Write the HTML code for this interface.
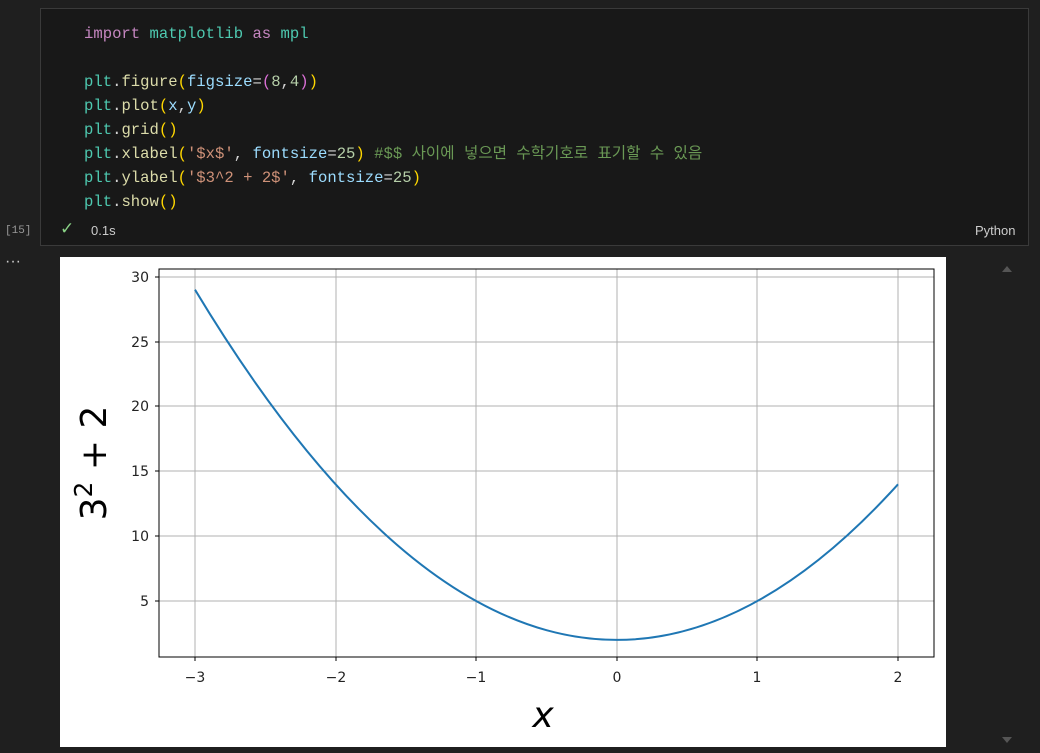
<!DOCTYPE html>
<html><head><meta charset="utf-8"><style>
body{margin:0;width:1040px;height:753px;background:#1f1f1f;position:relative;overflow:hidden;font-family:"Liberation Sans",sans-serif}
.cell{position:absolute;left:40px;top:8px;width:987px;height:236px;background:#181818;border:1px solid #3a3a3a}
.code{position:absolute;left:84px;top:22px;font-family:"Liberation Mono","Noto Sans CJK KR",monospace;font-size:15.6px;line-height:24px;white-space:pre;color:#d4d4d4}
.k{color:#c586c0}.t{color:#4ec9b0}.f{color:#dcdcaa}.p{color:#ffd700}.q{color:#da70d6}.v{color:#9cdcfe}.n{color:#b5cea8}.s{color:#ce9178}.c{color:#6a9955}
.sm{position:absolute;font-size:13px;color:#ccc}
</style></head><body>
<div class="cell"></div>
<div class="code"><span class="k">import</span> <span class="t">matplotlib</span> <span class="k">as</span> <span class="t">mpl</span>

<span class="t">plt</span>.<span class="f">figure</span><span class="p">(</span><span class="v">figsize</span>=<span class="q">(</span><span class="n">8</span>,<span class="n">4</span><span class="q">)</span><span class="p">)</span>
<span class="t">plt</span>.<span class="f">plot</span><span class="p">(</span><span class="v">x</span>,<span class="v">y</span><span class="p">)</span>
<span class="t">plt</span>.<span class="f">grid</span><span class="p">()</span>
<span class="t">plt</span>.<span class="f">xlabel</span><span class="p">(</span><span class="s">'$x$'</span>, <span class="v">fontsize</span>=<span class="n">25</span><span class="p">)</span> <span class="c">#$$ 사이에 넣으면 수학기호로 표기할 수 있음</span>
<span class="t">plt</span>.<span class="f">ylabel</span><span class="p">(</span><span class="s">'$3^2 + 2$'</span>, <span class="v">fontsize</span>=<span class="n">25</span><span class="p">)</span>
<span class="t">plt</span>.<span class="f">show</span><span class="p">()</span></div>
<div class="sm" style="left:5px;top:225px;font-size:11px;color:#999;font-family:'Liberation Mono',monospace">[15]</div>
<div class="sm" style="left:60px;top:219px;color:#89d185;font-size:17px">✓</div>
<div class="sm" style="left:91px;top:223px">0.1s</div>
<div class="sm" style="left:975px;top:223px">Python</div>
<div class="sm" style="left:5px;top:253px;font-size:16px;color:#ccc">···</div>
<svg style="position:absolute;left:0;top:0" width="1040" height="753">
<polygon points="1002,272 1012,272 1007,266" fill="#555"/>
<polygon points="1002,737 1012,737 1007,743" fill="#555"/>
<rect x="60" y="257" width="886" height="490" fill="#fff"/>
<g stroke="#b0b0b0" stroke-width="1">
<line x1="195" y1="269" x2="195" y2="657"/><line x1="336" y1="269" x2="336" y2="657"/><line x1="476" y1="269" x2="476" y2="657"/><line x1="617" y1="269" x2="617" y2="657"/><line x1="757" y1="269" x2="757" y2="657"/><line x1="898" y1="269" x2="898" y2="657"/>
<line x1="159" y1="277" x2="934" y2="277"/><line x1="159" y1="342" x2="934" y2="342"/><line x1="159" y1="406" x2="934" y2="406"/><line x1="159" y1="471" x2="934" y2="471"/><line x1="159" y1="536" x2="934" y2="536"/><line x1="159" y1="601" x2="934" y2="601"/>
</g>
<path fill="none" stroke="#1f77b4" stroke-width="2" d="M195,289.7 Q546.5,873.4 898,484.3"/>
<rect x="159" y="269" width="775" height="388" fill="none" stroke="#000" stroke-width="1"/>
<g stroke="#000"><line x1="195" y1="657" x2="195" y2="661"/><line x1="336" y1="657" x2="336" y2="661"/><line x1="476" y1="657" x2="476" y2="661"/><line x1="617" y1="657" x2="617" y2="661"/><line x1="757" y1="657" x2="757" y2="661"/><line x1="898" y1="657" x2="898" y2="661"/>
<line x1="155" y1="277" x2="159" y2="277"/><line x1="155" y1="342" x2="159" y2="342"/><line x1="155" y1="406" x2="159" y2="406"/><line x1="155" y1="471" x2="159" y2="471"/><line x1="155" y1="536" x2="159" y2="536"/><line x1="155" y1="601" x2="159" y2="601"/></g>
<g font-family="DejaVu Sans,sans-serif" font-size="14" fill="#222" text-anchor="middle">
<text x="195" y="682">−3</text><text x="336" y="682">−2</text><text x="476" y="682">−1</text><text x="617" y="682">0</text><text x="757" y="682">1</text><text x="898" y="682">2</text>
</g>
<g font-family="DejaVu Sans,sans-serif" font-size="14" fill="#222" text-anchor="end">
<text x="149" y="282">30</text><text x="149" y="347">25</text><text x="149" y="411">20</text><text x="149" y="476">15</text><text x="149" y="541">10</text><text x="149" y="606">5</text>
</g>
<text x="543" y="727" font-family="DejaVu Sans,sans-serif" font-style="italic" font-size="36" fill="#000" text-anchor="middle">x</text>
<text transform="translate(106,463) rotate(-90)" font-family="DejaVu Sans,sans-serif" font-size="36" fill="#000" text-anchor="middle">3<tspan font-size="25" dy="-14">2</tspan><tspan dy="14"> + 2</tspan></text>
</svg>
</body></html>
